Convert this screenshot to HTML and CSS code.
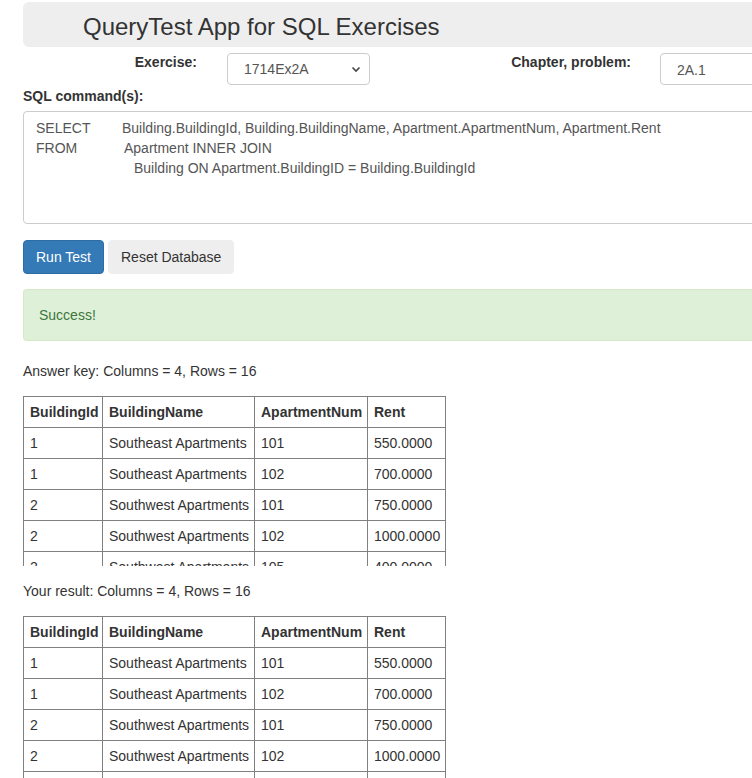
FILE: index.html
```html
<!DOCTYPE html>
<html>
<head>
<meta charset="utf-8">
<title>QueryTest App for SQL Exercises</title>
<link rel="stylesheet" href="styles.css">
</head>
<body>
<div class="page">
  <div class="jumbotron"><h1 class="title">QueryTest App for SQL Exercises</h1></div>

  <div class="form-row">
    <label class="lbl lbl-ex">Exercise:</label>
    <div class="select">
      <span>1714Ex2A</span>
      <svg class="chev" width="10" height="7" viewBox="0 0 10 7"><polyline points="1.5,1.5 5,5 8.5,1.5" fill="none" stroke="#444" stroke-width="1.6"/></svg>
    </div>
    <label class="lbl lbl-ch">Chapter, problem:</label>
    <div class="input">2A.1</div>
  </div>

  <label class="lbl-sql">SQL command(s):</label>
  <div class="textarea">
    <div class="ln"><span class="kw kw-sel">SELECT</span>Building.BuildingId, Building.BuildingName, Apartment.ApartmentNum, Apartment.Rent</div>
    <div class="ln"><span class="kw kw-from">FROM</span>Apartment INNER JOIN</div>
    <div class="ln ln-ind">Building ON Apartment.BuildingID = Building.BuildingId</div>
  </div>

  <div class="btns">
    <button class="btn btn-primary">Run Test</button>
    <button class="btn btn-default">Reset Database</button>
  </div>

  <div class="alert">Success!</div>

  <p class="caption cap-first">Answer key: Columns = 4, Rows = 16</p>
  <div class="clip">
    <table class="grid">
      <colgroup><col class="c1"><col class="c2"><col class="c3"><col class="c4"></colgroup>
      <tr><th>BuildingId</th><th>BuildingName</th><th>ApartmentNum</th><th>Rent</th></tr>
      <tr><td>1</td><td>Southeast Apartments</td><td>101</td><td>550.0000</td></tr>
      <tr><td>1</td><td>Southeast Apartments</td><td>102</td><td>700.0000</td></tr>
      <tr><td>2</td><td>Southwest Apartments</td><td>101</td><td>750.0000</td></tr>
      <tr><td>2</td><td>Southwest Apartments</td><td>102</td><td>1000.0000</td></tr>
      <tr><td>2</td><td>Southwest Apartments</td><td>105</td><td>400.0000</td></tr>
      <tr><td>3</td><td>Northeast Apartments</td><td>101</td><td>600.0000</td></tr>
    </table>
  </div>

  <p class="caption">Your result: Columns = 4, Rows = 16</p>
  <div class="clip">
    <table class="grid">
      <colgroup><col class="c1"><col class="c2"><col class="c3"><col class="c4"></colgroup>
      <tr><th>BuildingId</th><th>BuildingName</th><th>ApartmentNum</th><th>Rent</th></tr>
      <tr><td>1</td><td>Southeast Apartments</td><td>101</td><td>550.0000</td></tr>
      <tr><td>1</td><td>Southeast Apartments</td><td>102</td><td>700.0000</td></tr>
      <tr><td>2</td><td>Southwest Apartments</td><td>101</td><td>750.0000</td></tr>
      <tr><td>2</td><td>Southwest Apartments</td><td>102</td><td>1000.0000</td></tr>
      <tr><td>2</td><td>Southwest Apartments</td><td>105</td><td>400.0000</td></tr>
      <tr><td>3</td><td>Northeast Apartments</td><td>101</td><td>600.0000</td></tr>
    </table>
  </div>
</div>
</body>
</html>
```

FILE: styles.css
```css
html, body {
  margin: 0;
  padding: 0;
  overflow: hidden;
  background: #fff;
}
body {
  font-family: "Liberation Sans", Arial, Helvetica, sans-serif;
  font-size: 14px;
  line-height: 20px;
  color: #333;
}
.page {
  width: 800px;
  padding-left: 23px;
  padding-top: 2px;
}
.jumbotron {
  background: #eee;
  height: 45px;
  border-radius: 6px 0 0 6px;
  padding-left: 60px;
}
.title {
  margin: 0;
  font-size: 24px;
  font-weight: normal;
  line-height: 50px;
  height: 45px;
  color: #333;
}
.form-row {
  display: flex;
  align-items: flex-start;
}
.lbl {
  font-weight: bold;
  text-align: right;
  padding-top: 5px;
}
.lbl-ex {
  width: 174px;
}
.lbl-ch {
  width: 261px;
}
.select {
  margin-left: 30px;
  margin-top: 6px;
  width: 143px;
  height: 32px;
  box-sizing: border-box;
  border: 1px solid #ccc;
  border-radius: 4px;
  display: flex;
  align-items: center;
  justify-content: space-between;
  padding: 0 8px 0 16px;
  color: #555;
}
.chev {
  display: block;
}
.input {
  margin-left: 29px;
  margin-top: 6px;
  width: 140px;
  height: 32px;
  box-sizing: border-box;
  border: 1px solid #ccc;
  border-radius: 4px;
  padding: 6px 16px;
  color: #555;
}
.lbl-sql {
  display: block;
  font-weight: bold;
  margin-top: 1px;
  margin-bottom: 5px;
}
.textarea {
  height: 113px;
  box-sizing: border-box;
  border: 1px solid #ccc;
  border-radius: 4px 0 0 4px;
  padding: 6px 12px;
  color: #555;
  white-space: nowrap;
}
.kw {
  display: inline-block;
}
.kw-sel {
  width: 86px;
}
.kw-from {
  width: 88px;
}
.ln-ind {
  padding-left: 98px;
}
.btns {
  margin-top: 16px;
  display: flex;
  gap: 4px;
}
.btn {
  font-family: inherit;
  font-size: 14px;
  line-height: 20px;
  padding: 6px 12px;
  border-radius: 4px;
  border: 1px solid transparent;
  cursor: pointer;
}
.btn-primary {
  background: #337ab7;
  border-color: #2e6da4;
  color: #fff;
}
.btn-default {
  background: #eee;
  border-color: #eee;
  color: #333;
}
.alert {
  margin-top: 15px;
  background: #dff0d8;
  border: 1px solid #d6e9c6;
  border-right: none;
  border-radius: 4px 0 0 4px;
  color: #3c763d;
  padding: 15px;
}
.caption {
  margin: 15px 0 15px;
}
.cap-first {
  margin-top: 20px;
}
.clip {
  height: 170px;
  overflow: hidden;
}
.grid {
  border-collapse: collapse;
  table-layout: fixed;
  width: 422px;
}
.c1 { width: 79px; }
.c2 { width: 152px; }
.c3 { width: 113px; }
.c4 { width: 78px; }
.grid th, .grid td {
  border: 1px solid #808080;
  padding: 5px 6px;
  text-align: left;
  white-space: nowrap;
  overflow: hidden;
  height: 20px;
}
.grid th {
  font-weight: bold;
}
```
